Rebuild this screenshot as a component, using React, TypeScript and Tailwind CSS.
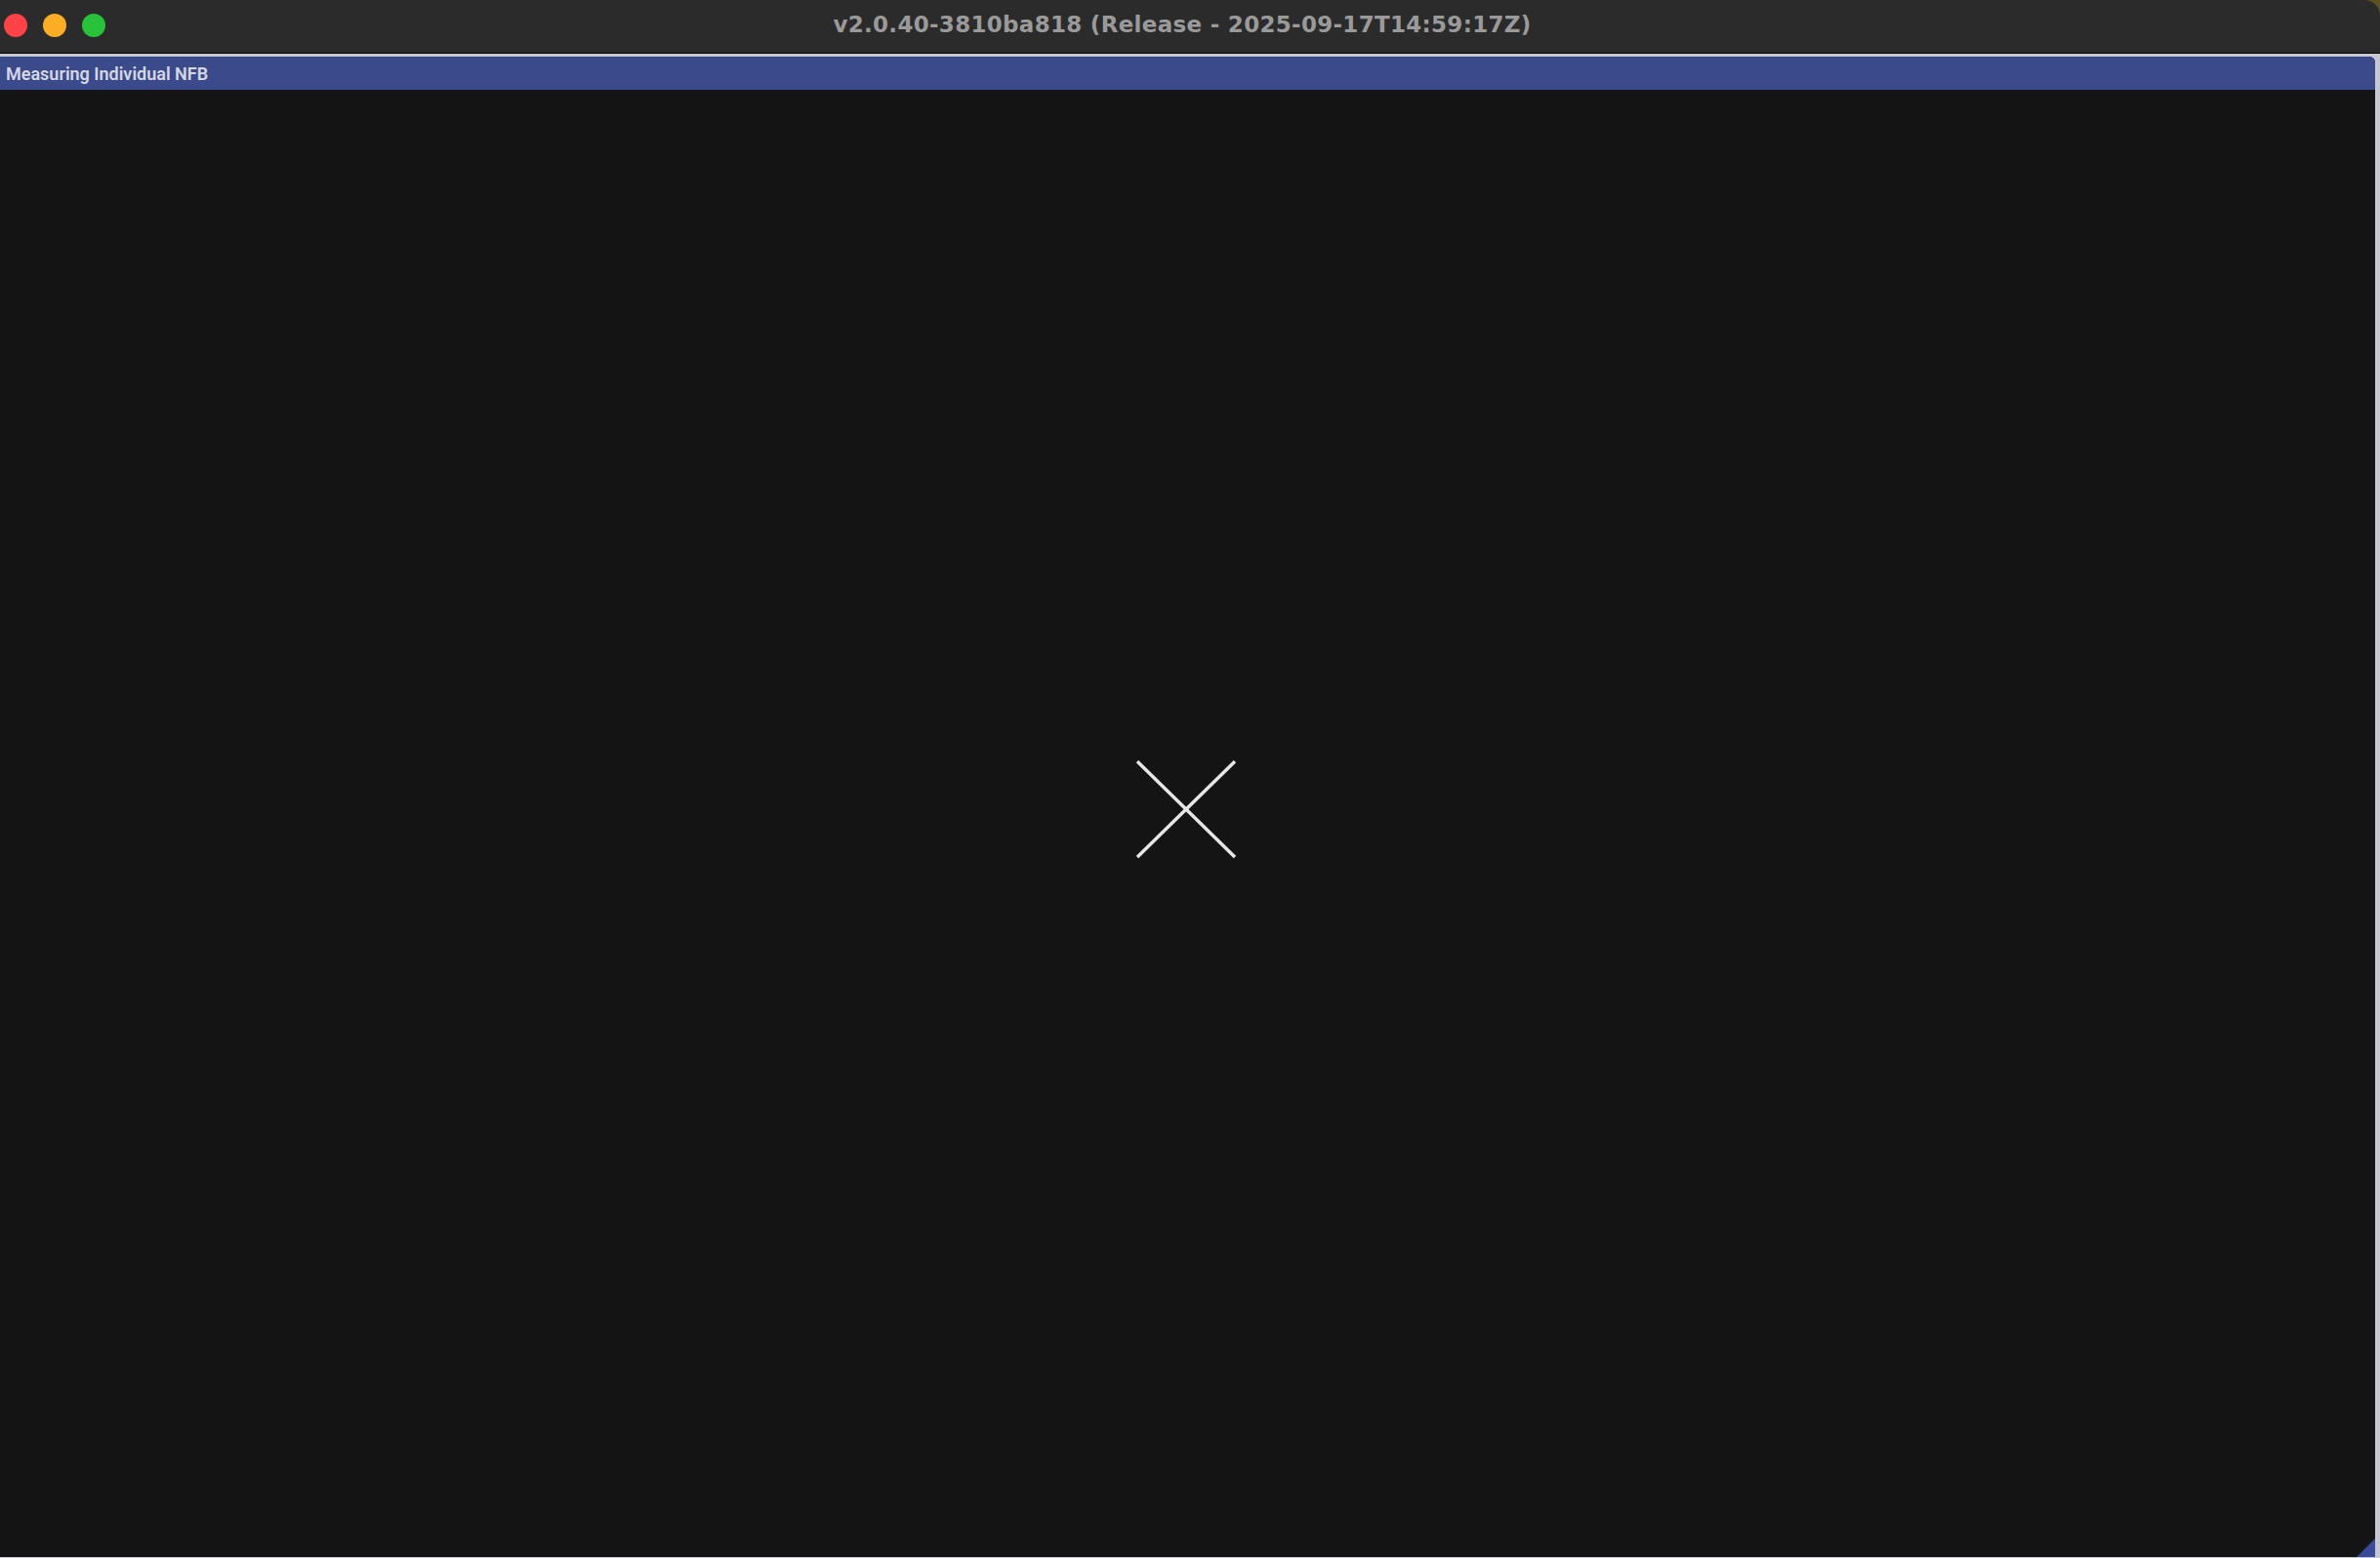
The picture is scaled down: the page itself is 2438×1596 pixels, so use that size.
import React from "react";

export default function App() {
  return (
    <div className="w-[2438px] h-[1596px] bg-[#5e5120] flex flex-col overflow-hidden">
      <div className="relative h-[55px] shrink-0 bg-[#2b2b2b] rounded-tr-[16px] border-b border-black flex items-center justify-center">
        <div className="absolute left-[4px] top-[14px] flex gap-[16px]">
          <div className="w-[24px] h-[24px] rounded-full bg-[#fb4247]" />
          <div className="w-[24px] h-[24px] rounded-full bg-[#fbae25]" />
          <div className="w-[24px] h-[24px] rounded-full bg-[#28c13a]" />
        </div>
        <div className="pr-[16px] pb-[4px] text-[#9a9a9a] text-[23px] font-bold tracking-[0.3px] leading-none [font-family:'DejaVu_Sans',sans-serif]">
          v2.0.40-3810ba818 (Release - 2025-09-17T14:59:17Z)
        </div>
      </div>
      <div className="flex-1 flex flex-col bg-[#c6c7d1] pt-[3px] pr-[5px] pb-[1px]">
        <div className="relative flex-1 flex flex-col bg-[#141414] rounded-tr-[6px] overflow-hidden">
          <div className="h-[34px] shrink-0 bg-[#3a4a8b] flex items-center pl-[6px] text-[18px] font-semibold text-[#d5d7e3] [font-family:Roboto,sans-serif]">
            Measuring Individual NFB
          </div>
          <div className="flex-1" />
          <svg
            className="absolute left-[calc(50%-2px)] top-[calc(50%+2px)] -translate-x-1/2 -translate-y-1/2"
            width="104"
            height="102"
            viewBox="0 0 104 102"
          >
            <line x1="2" y1="2" x2="102" y2="100" stroke="#e6e6e6" strokeWidth="3.5" />
            <line x1="102" y1="2" x2="2" y2="100" stroke="#e6e6e6" strokeWidth="3.5" />
          </svg>
          <svg className="absolute right-0 bottom-0" width="20" height="20" viewBox="0 0 20 20">
            <polygon points="20,1 20,20 1,20" fill="#3a4a9a" />
          </svg>
        </div>
      </div>
    </div>
  );
}
